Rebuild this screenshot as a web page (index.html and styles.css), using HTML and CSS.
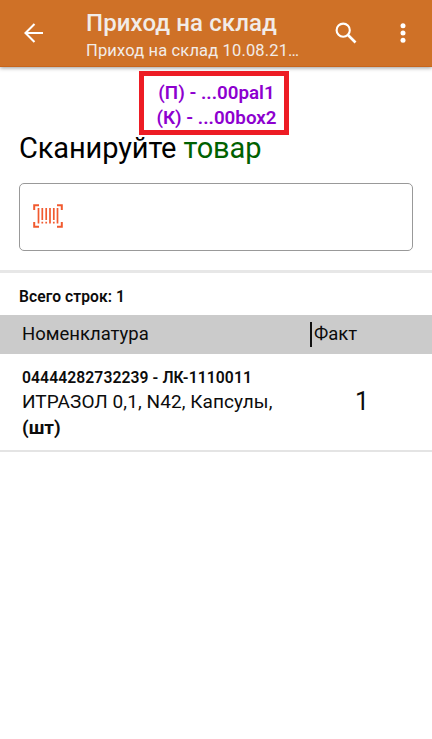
FILE: index.html
```html
<!DOCTYPE html>
<html lang="ru">
<head>
<meta charset="utf-8">
<title>Приход на склад</title>
<link rel="stylesheet" href="styles.css">
</head>
<body>
<header class="bar">
  <svg class="back" viewBox="0 0 20 20"><path d="M19 10H2M10.5 1L1.5 10l9 9" fill="none" stroke="#fff" stroke-width="2.1"/></svg>
  <div class="titles">
    <h1>Приход на склад</h1>
    <p>Приход на склад 10.08.21…</p>
  </div>
  <svg class="search" viewBox="0 0 22 22"><circle cx="8.2" cy="8.2" r="6.6" fill="none" stroke="#fff" stroke-width="2.1"/><path d="M13 13l7.5 7.5" stroke="#fff" stroke-width="2.6"/></svg>
  <svg class="more" viewBox="0 0 6 20"><g fill="#fff"><circle cx="3" cy="2.7" r="2.5"/><circle cx="3" cy="10" r="2.5"/><circle cx="3" cy="17.3" r="2.5"/></g></svg>
</header>
<main>
  <div class="location">
    <div>(П) - ...00pal1</div>
    <div>(К) - ...00box2</div>
  </div>
  <h2>Сканируйте <span class="goal">товар</span></h2>
  <div class="field">
    <svg class="barcode" viewBox="0 0 30 24"><g fill="none" stroke="#f15a2f"><path d="M1.2 6V1.2H6M24 1.2h4.8V6M1.2 18v4.8H6M24 22.8h4.8V18" stroke-width="2"/><path d="M5.5 4v15.5M24.5 4v15.5M17 4v15.5" stroke-width="1.7"/><path d="M9.3 4v12M13.2 4v12M20.8 4v12M9.3 17.7v1.8M13.2 17.7v1.8M20.8 17.7v1.8" stroke-width="1.7"/></g></svg>
  </div>
  <section class="list">
    <p class="total">Всего строк: 1</p>
    <div class="row head">
      <span class="name">Номенклатура</span>
      <span class="fact">Факт</span>
    </div>
    <div class="row item">
      <div class="name">
        <div class="code">04444282732239 - ЛК-1110011</div>
        <div class="product">ИТРАЗОЛ 0,1, N42, Капсулы,</div>
        <div class="unit">(шт)</div>
      </div>
      <div class="count">1</div>
    </div>
  </section>
</main>
</body>
</html>
```
FILE: styles.css
```css
* { box-sizing: border-box; }
body { margin: 0; background: #fff; color: #0c0c0c; font-family: Roboto, sans-serif; white-space: nowrap; }
h1, h2, p { margin: 0; }
svg { display: block; flex: none; }
.bar { display: flex; height: 67px; padding: 0 26px 0 24px; background: #cf7127; border-bottom: 1px solid #c7651c; box-shadow: 0 1px 4px rgba(0,0,0,.4); color: #f2ece8; }
.back { width: 20px; height: 20px; margin-top: 23px; }
.titles { flex: 1; padding: 9px 0 0 42px; }
.titles h1 { font-size: 24px; line-height: 28px; font-weight: 500; letter-spacing: .1px; }
.titles p { margin-top: 4px; font-size: 16.5px; line-height: 20px; letter-spacing: .15px; }
.search { width: 22px; height: 22px; margin: 22px 43.5px 0 0; }
.more { width: 6px; height: 20px; margin-top: 23px; }
.location { width: 150px; height: 64px; margin: 4px 0 0 139px; padding: 5px 0 0 5px; border: 5px solid #ed1c24; color: #8d00cf; font-size: 18.8px; line-height: 25px; font-weight: 600; text-align: center; }
h2 { margin: -4px 0 0 19px; font-size: 29px; line-height: 34px; font-weight: 400; letter-spacing: -.12px; color: #000; }
.goal { color: #006100; }
.field { width: 394px; height: 68px; margin: 18px 0 0 19px; padding: 20px 13px; border: 1px solid #999; border-radius: 5px; }
.barcode { width: 30px; height: 24px; }
.list { margin-top: 19px; border-top: 3px solid #e7e7e7; }
.total { height: 42px; padding: 14px 0 0 19px; font-size: 15.6px; line-height: 20px; font-weight: 600; letter-spacing: .08px; }
.row { display: flex; padding-left: 22px; }
.head { height: 39px; background: #cbcbcb; font-size: 18.5px; line-height: 38px; }
.head .name { width: 288px; }
.fact { height: 25px; margin-top: 7px; padding-left: 2px; border-left: 2px solid #111; line-height: 24px; }
.item { height: 98px; padding-top: 13px; border-bottom: 2px solid #e4e4e4; }
.item .name { width: 333px; }
.code { font-size: 15.7px; line-height: 22px; font-weight: 600; letter-spacing: .08px; }
.product { font-size: 19px; line-height: 26px; letter-spacing: .08px; }
.unit { font-size: 19px; line-height: 25px; font-weight: 700; }
.count { padding-top: 20px; font-size: 25px; line-height: 30px; }
```
